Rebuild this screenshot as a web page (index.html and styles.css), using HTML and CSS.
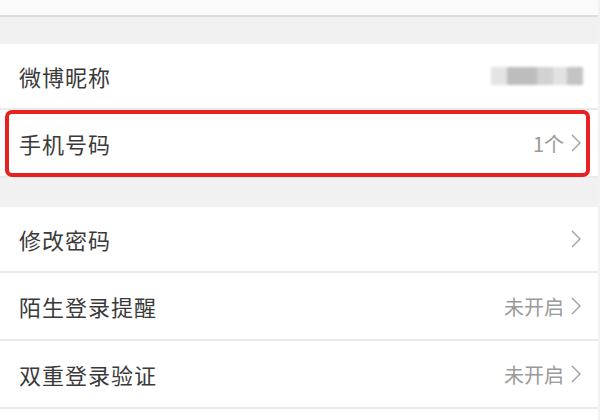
FILE: index.html
```html
<!DOCTYPE html>
<html lang="zh-CN">
<head>
    <meta charset="UTF-8">
    <meta name="viewport" content="width=device-width, initial-scale=1.0">
    <title>账号与安全</title>
    <link rel="stylesheet" href="styles.css">
</head>
<body>
    <div class="topbar"></div>
    <div class="gap gap-first"></div>

    <div class="group">
        <div class="row">
            <span class="label">微博昵称</span>
            <span class="blurred">
                <i class="b1"></i><i class="b2"></i><i class="b3"></i><i class="b4"></i><i class="b5"></i>
            </span>
        </div>
        <div class="row marked">
            <span class="label">手机号码</span>
            <span class="value">1个<svg class="chevron" viewBox="0 0 10 18"><polyline points="1,1 9,9 1,17"/></svg></span>
        </div>
    </div>

    <div class="gap"></div>

    <div class="group">
        <div class="row">
            <span class="label">修改密码</span>
            <span class="value"><svg class="chevron" viewBox="0 0 10 18"><polyline points="1,1 9,9 1,17"/></svg></span>
        </div>
        <div class="row">
            <span class="label">陌生登录提醒</span>
            <span class="value">未开启<svg class="chevron" viewBox="0 0 10 18"><polyline points="1,1 9,9 1,17"/></svg></span>
        </div>
        <div class="row">
            <span class="label">双重登录验证</span>
            <span class="value">未开启<svg class="chevron" viewBox="0 0 10 18"><polyline points="1,1 9,9 1,17"/></svg></span>
        </div>
    </div>
</body>
</html>
```

FILE: styles.css
```css
body {
    margin: 0;
    overflow: hidden;
    font-family: "Noto Sans CJK SC", "Noto Sans", sans-serif;
    background-color: #ffffff;
    border-right: 2px solid #f2f2f2;
    height: 420px;
    box-sizing: border-box;
}

.topbar {
    height: 15px;
    background: #fafafa;
    border-bottom: 2px solid #dcdcdc;
}

.gap {
    height: 29px;
    background: #f1f1f1;
}

.gap-first {
    height: 27px;
}

.group {
    background: #ffffff;
}

.row {
    height: 66px;
    display: flex;
    align-items: center;
    justify-content: space-between;
    padding: 0 17px 0 19px;
    border-bottom: 2px solid #ebebeb;
    background: #ffffff;
}

.group .row:first-child {
    height: 64px;
}

.label {
    font-size: 22px;
    color: #3a3a3a;
    letter-spacing: 1px;
}

.value {
    display: flex;
    align-items: center;
    gap: 7px;
    font-size: 20px;
    color: #9a9a9a;
}

.chevron {
    width: 10px;
    height: 18px;
    fill: none;
    stroke: #a0a0a0;
    stroke-width: 1.4;
}

/* red highlight drawn over the phone row */
.marked {
    position: relative;
}

.marked::after {
    content: "";
    position: absolute;
    top: 0;
    left: 5px;
    right: 8px;
    bottom: -1px;
    border: 4px solid #e82020;
    border-radius: 7px;
}

/* blurred nickname */
.blurred {
    display: flex;
    align-items: center;
    height: 18px;
    margin-right: -2px;
    filter: blur(1.5px);
}

.blurred i {
    display: block;
    height: 18px;
}

.b1 { width: 16px; background: #e4e4e4; }
.b2 { width: 30px; background: #bdbdbd; }
.b3 { width: 16px; background: #d2d2d2; }
.b4 { width: 14px; background: #e2e2e2; }
.b5 { width: 16px; background: #c4c4c4; }
```
